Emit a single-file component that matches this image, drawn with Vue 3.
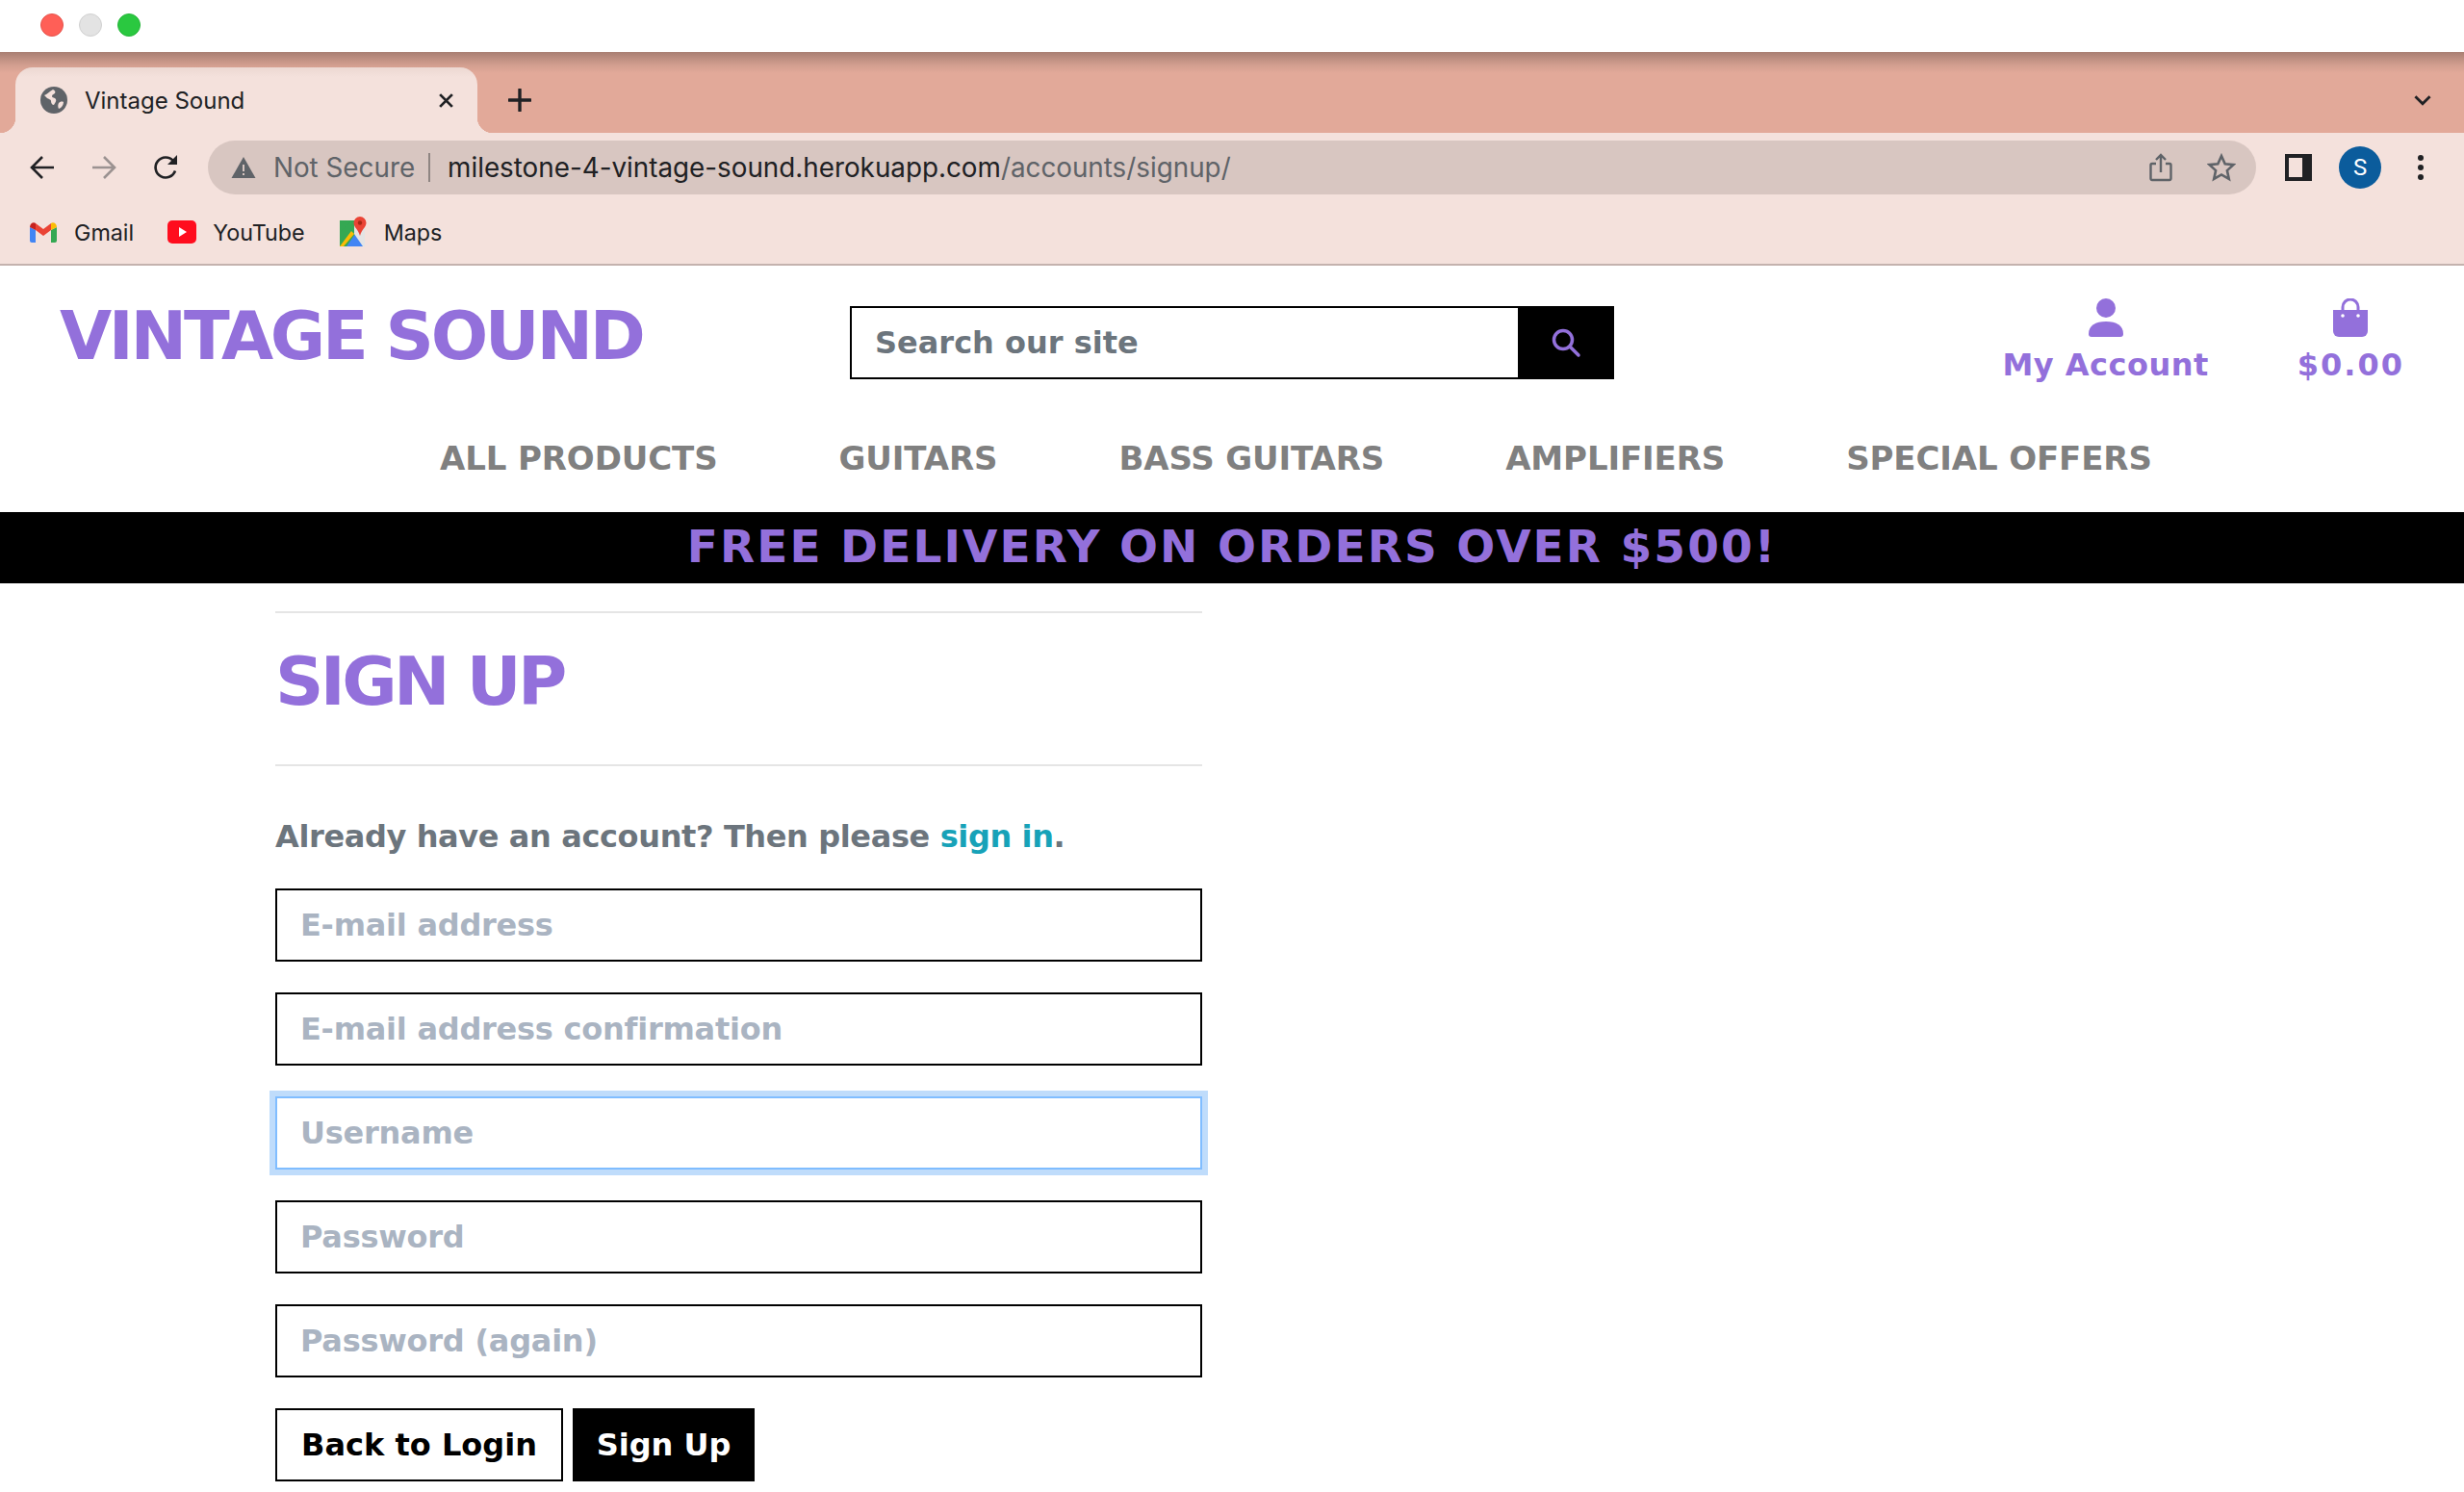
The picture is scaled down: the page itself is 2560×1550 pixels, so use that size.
<script setup>
const bookmarks = ['Gmail', 'YouTube', 'Maps']
const navLinks = ['ALL PRODUCTS', 'GUITARS', 'BASS GUITARS', 'AMPLIFIERS', 'SPECIAL OFFERS']
const fields = [
  { placeholder: 'E-mail address', type: 'email' },
  { placeholder: 'E-mail address confirmation', type: 'email' },
  { placeholder: 'Username', type: 'text', focused: true },
  { placeholder: 'Password', type: 'password' },
  { placeholder: 'Password (again)', type: 'password' }
]
</script>

<template>
  <div class="window">
    <div class="titlebar">
      <span class="light light--red"></span>
      <span class="light light--grey"></span>
      <span class="light light--green"></span>
    </div>

    <div class="tabstrip">
      <div class="tab">
        <svg class="tab__globe" viewBox="0 0 28 28">
          <circle cx="14" cy="14" r="14" fill="#5f6368" />
          <path d="M4 9c3-1 5-4 9-6 2 1 3 2 2 4-1 1-3 1-3 3 0 2 3 1 4 3 1 2-1 4-2 6-2 0-3-2-3-4 0-2-3-2-4-3-1-1-2-2-3-3zM19 17c1-1 3-2 5-1 0 3-2 6-5 7-1-2-1-4 0-6z" fill="#f4e1dc" />
        </svg>
        <span class="tab__title">Vintage Sound</span>
        <svg class="tab__close" viewBox="0 0 16 16">
          <path d="M2 2l12 12M14 2L2 14" stroke="#202124" stroke-width="2.6" />
        </svg>
      </div>
      <svg class="tab__new" viewBox="0 0 24 24">
        <path d="M12 1v22M1 12h22" stroke="#202124" stroke-width="3.400" stroke-linecap="round" />
      </svg>
      <svg class="tabstrip__more" viewBox="0 0 18 12">
        <path d="M2 2l7 7 7-7" fill="none" stroke="#202124" stroke-width="2.6" />
      </svg>
    </div>

    <div class="toolbar">
      <svg class="tool tool--back" viewBox="0 0 28 28">
        <path d="M26 14H3M14 3L3 14l11 11" fill="none" stroke="#202124" stroke-width="2.6" />
      </svg>
      <svg class="tool tool--forward" viewBox="0 0 28 28">
        <path d="M2 14h23M14 3l11 11-11 11" fill="none" stroke="#9b9291" stroke-width="2.6" />
      </svg>
      <svg class="tool tool--reload" viewBox="0 0 28 28">
        <path d="M23 17.500A10.500 10.500 0 1 1 21 7" fill="none" stroke="#202124" stroke-width="2.6" />
        <path d="M25 1v10H15z" fill="#202124" />
      </svg>
      <div class="omnibox">
        <svg class="omnibox__warn" viewBox="0 0 26 24">
          <path d="M13 1l12.500 22H.5z" fill="#5f6368" />
          <path d="M12 9h2v7h-2zM12 18h2v2h-2z" fill="#d8c6c1" />
        </svg>
        <span class="omnibox__secure">Not Secure</span>
        <span class="omnibox__sep"></span>
        <span class="omnibox__url">milestone-4-vintage-sound.herokuapp.com<span class="omnibox__path">/accounts/signup/</span></span>
        <svg class="omnibox__share" viewBox="0 0 24 30">
          <path d="M7 11H3a1.500 1.500 0 0 0-1.500 1.500v14A1.500 1.500 0 0 0 3 28h18a1.500 1.500 0 0 0 1.500-1.500v-14A1.500 1.500 0 0 0 21 11h-4" fill="none" stroke="#5f6368" stroke-width="2.4" />
          <path d="M12 20V2M7 7l5-5 5 5" fill="none" stroke="#5f6368" stroke-width="2.4" />
        </svg>
        <svg class="omnibox__star" viewBox="0 0 30 30">
          <path d="M15 3l3.700 8.200 8.800.9-6.600 6 1.900 8.800L15 22.400 7.200 26.900l1.900-8.800-6.600-6 8.800-.9z" fill="none" stroke="#5f6368" stroke-width="2.600" />
        </svg>
      </div>
      <svg class="tool tool--side" viewBox="0 0 28 28">
        <rect width="28" height="28" fill="#202124" />
        <rect x="4" y="4" width="14" height="20" fill="#f4e1dc" />
      </svg>
      <div class="avatar">S</div>
      <svg class="tool tool--kebab" viewBox="0 0 6 26">
        <circle cx="3" cy="3" r="3" fill="#202124" />
        <circle cx="3" cy="13" r="3" fill="#202124" />
        <circle cx="3" cy="23" r="3" fill="#202124" />
      </svg>
    </div>

    <div class="bookmarks">
      <div v-for="item in bookmarks" :key="item" class="bookmark">
        <svg v-if="item === 'Gmail'" class="bookmark__icon" viewBox="0 0 30 24">
          <path d="M1 7v14a2 2 0 0 0 2 2h4V10z" fill="#4285f4" />
          <path d="M29 7v14a2 2 0 0 1-2 2h-4V10z" fill="#34a853" />
          <path d="M1 7c0-4 4-6 6-4v7z" fill="#c5221f" />
          <path d="M29 7c0-4-4-6-6-4v7z" fill="#fbbc04" />
          <path d="M7 3l8 6 8-6v7l-8 6-8-6z" fill="#ea4335" />
        </svg>
        <svg v-else-if="item === 'YouTube'" class="bookmark__icon" viewBox="0 0 30 24">
          <rect width="30" height="24" rx="5" fill="#ff0d1e" />
          <path d="M12 7l8 5-8 5z" fill="#fff" />
        </svg>
        <svg v-else class="bookmark__icon bookmark__icon--maps" viewBox="0 0 30 32">
          <path d="M1 4h20v27H1z" fill="#34a853" />
          <path d="M1 4h12L1 17z" fill="#34a853" />
          <path d="M8 31l9-13 9 13z" fill="#4285f4" />
          <path d="M1 31l12-16 3 3L5 31z" fill="#fbbc04" />
          <path d="M16 4h6l5 7v20h-2l-9-13z" fill="#e4e4e4" />
          <path d="M22 0a6.500 6.500 0 0 1 6.500 6.500C28.500 11 24 13 22 20c-2-7-6.500-9-6.500-13.500A6.500 6.500 0 0 1 22 0z" fill="#ea4335" />
          <circle cx="22" cy="6.500" r="2.200" fill="#a52714" />
        </svg>
        <span>{{ item }}</span>
      </div>
    </div>

    <header class="site-header">
      <div class="site-header__top">
        <a class="logo">VINTAGE SOUND</a>
        <form class="search" @submit.prevent>
          <input class="search__input" type="text" placeholder="Search our site" />
          <button class="search__btn" type="button" aria-label="Search">
            <svg viewBox="0 0 32 32" width="32" height="32">
              <circle cx="13" cy="13" r="9.500" fill="none" stroke="#9370db" stroke-width="3.500" />
              <path d="M20 20l9 9" stroke="#9370db" stroke-width="3.500" stroke-linecap="round" />
            </svg>
          </button>
        </form>
        <div class="actions">
          <a class="action action--account">
            <svg viewBox="0 0 36 40" width="36" height="40">
              <circle cx="18" cy="10" r="10" fill="#9370db" />
              <path d="M0 37c0-9 7-13 18-13s18 4 18 13a3 3 0 0 1-3 3H3a3 3 0 0 1-3-3z" fill="#9370db" />
            </svg>
            <span>My Account</span>
          </a>
          <a class="action action--cart">
            <svg viewBox="0 0 36 40" width="36" height="40">
              <path d="M10 14V9a8 8 0 0 1 16 0v5" fill="none" stroke="#9370db" stroke-width="3" />
              <path d="M0 12h36v22a6 6 0 0 1-6 6H6a6 6 0 0 1-6-6z" fill="#9370db" />
              <circle cx="10" cy="18" r="1.800" fill="#fff" />
              <circle cx="26" cy="18" r="1.800" fill="#fff" />
            </svg>
            <span>$0.00</span>
          </a>
        </div>
      </div>
      <nav class="main-nav">
        <a v-for="link in navLinks" :key="link" class="main-nav__link">{{ link }}</a>
      </nav>
      <div class="banner">FREE DELIVERY ON ORDERS OVER $500!</div>
    </header>

    <main class="signup">
      <hr class="signup__rule" />
      <h2 class="signup__title">SIGN UP</h2>
      <hr class="signup__rule" />
      <p class="signup__note">Already have an account? Then please <a class="signup__link">sign in</a>.</p>
      <form class="signup__form" @submit.prevent>
        <input
          v-for="field in fields"
          :key="field.placeholder"
          class="signup__input"
          :class="{ 'signup__input--focus': field.focused }"
          :type="field.type"
          :placeholder="field.placeholder"
        />
        <div class="signup__buttons">
          <a class="btn btn--outline">Back to Login</a>
          <button class="btn btn--solid" type="submit">Sign Up</button>
        </div>
      </form>
    </main>
  </div>
</template>

<style>
html,
body {
  margin: 0;
  background: #fff;
}
</style>

<style scoped>
.window {
  width: 2560px;
  height: 1550px;
  overflow: hidden;
  font-family: "DejaVu Sans", sans-serif;
  background: #fff;
}

.titlebar {
  height: 54px;
  box-sizing: border-box;
  padding: 14px 0 0 42px;
  display: flex;
  gap: 16px;
  background: #fff;
}

.light {
  width: 24px;
  height: 24px;
  border-radius: 50%;
  box-sizing: border-box;
}

.light--red {
  background: #ff5f57;
  border: 1px solid #e5534c;
}

.light--grey {
  background: #e3e3e3;
  border: 1px solid #d0d0d0;
}

.light--green {
  background: #2ac840;
  border: 1px solid #25b539;
}

.tabstrip {
  height: 84px;
  box-sizing: border-box;
  padding-top: 16px;
  display: flex;
  align-items: flex-start;
  background: linear-gradient(#a97f73 0, #d39f90 14px, #e2a999 22px);
}

.tab {
  position: relative;
  width: 480px;
  height: 68px;
  margin-left: 16px;
  box-sizing: border-box;
  padding: 0 24px;
  display: flex;
  align-items: center;
  background: linear-gradient(#ecd8d2 0, #f4e1dc 10px);
  border-radius: 18px 18px 0 0;
  font-family: Inter, sans-serif;
  font-size: 24px;
  color: #202124;
}

.tab::before,
.tab::after {
  content: "";
  position: absolute;
  bottom: 0;
  width: 16px;
  height: 16px;
}

.tab::before {
  left: -16px;
  background: radial-gradient(circle at 0 0, transparent 16px, #f4e1dc 16.5px);
}

.tab::after {
  right: -16px;
  background: radial-gradient(circle at 100% 0, transparent 16px, #f4e1dc 16.5px);
}

.tab__globe {
  width: 28px;
  height: 28px;
  margin-right: 18px;
  margin-left: 2px;
}

.tab__title {
  flex: 1;
}

.tab__close {
  width: 17px;
  height: 17px;
}

.tab__new {
  width: 24px;
  height: 24px;
  margin: 22px 0 0 32px;
}

.tabstrip__more {
  width: 20px;
  height: 13px;
  margin: 28px 0 0 auto;
  margin-right: 33px;
}

.toolbar {
  height: 72px;
  display: flex;
  align-items: center;
  background: #f4e1dc;
}

.tool {
  flex: none;
}

.tool--back,
.tool--forward,
.tool--reload {
  width: 28px;
  height: 28px;
}

.tool--back {
  margin-left: 30px;
}

.tool--forward {
  margin-left: 36px;
}

.tool--reload {
  margin-left: 37px;
}

.omnibox {
  width: 2128px;
  height: 56px;
  margin-left: 29px;
  box-sizing: border-box;
  padding: 0 21px 0 24px;
  display: flex;
  align-items: center;
  background: #d8c6c1;
  border-radius: 28px;
  font-family: Inter, sans-serif;
  font-size: 27.8px;
  color: #202124;
}

.omnibox__warn {
  width: 26px;
  height: 24px;
}

.omnibox__secure {
  margin-left: 18px;
  color: #5f6368;
}

.omnibox__sep {
  width: 2px;
  height: 30px;
  margin: 0 18px 0 14px;
  background: #8f8582;
}

.omnibox__url {
  flex: 1;
}

.omnibox__path {
  color: #5f6368;
}

.omnibox__share {
  width: 24px;
  height: 30px;
}

.omnibox__star {
  width: 30px;
  height: 30px;
  margin-left: 36px;
}

.tool--side {
  width: 28px;
  height: 28px;
  margin-left: 30px;
}

.avatar {
  width: 44px;
  height: 44px;
  margin-left: 28px;
  border-radius: 50%;
  background: #0b5c9c;
  color: #fff;
  font-family: Roboto, sans-serif;
  font-size: 24px;
  display: flex;
  align-items: center;
  justify-content: center;
}

.tool--kebab {
  width: 6px;
  height: 26px;
  margin-left: 38px;
}

.bookmarks {
  height: 66px;
  box-sizing: border-box;
  padding: 0 0 2px 30px;
  display: flex;
  align-items: center;
  gap: 35px;
  background: #f4e1dc;
  border-bottom: 2px solid #c4b2ae;
  font-family: Inter, sans-serif;
  font-size: 23.3px;
  color: #202124;
}

.bookmark {
  display: flex;
  align-items: center;
  gap: 17px;
}

.bookmark__icon {
  width: 30px;
  height: 24px;
}

.bookmark__icon--maps {
  height: 32px;
}

.site-header__top {
  height: 149px;
  display: grid;
  grid-template-columns: 883px 794px 1fr;
}

.logo {
  padding: 33px 0 0 62px;
  font-size: 70px;
  line-height: 80px;
  font-weight: 700;
  letter-spacing: -3.3px;
  color: #9370db;
  white-space: nowrap;
}

.search {
  height: 76px;
  margin-top: 42px;
  display: flex;
}

.search__input {
  width: 694px;
  box-sizing: border-box;
  padding: 0 24px;
  border: 2px solid #000;
  border-right: 0;
  border-radius: 0;
  outline: none;
  font-family: inherit;
  font-size: 32px;
  font-weight: 700;
}

.search__input::placeholder {
  color: #6c757d;
  opacity: 1;
}

.search__btn {
  width: 100px;
  border: 0;
  padding: 0;
  background: #000;
  display: flex;
  align-items: center;
  justify-content: center;
}

.actions {
  padding: 34px 62px 0 0;
  display: flex;
  justify-content: flex-end;
  gap: 92px;
}

.action {
  display: flex;
  flex-direction: column;
  align-items: center;
  gap: 9px;
  font-size: 32px;
  line-height: 40px;
  font-weight: 700;
  color: #9370db;
}

.action--account {
  letter-spacing: 0.5px;
}

.action--cart {
  letter-spacing: 2px;
}

.main-nav {
  height: 107px;
  box-sizing: border-box;
  padding: 0 0 6px 457px;
  display: flex;
  align-items: center;
  gap: 126px;
}

.main-nav__link {
  font-size: 34px;
  font-weight: 700;
  letter-spacing: -0.12px;
  color: #808080;
  white-space: nowrap;
}

.banner {
  height: 74px;
  box-sizing: border-box;
  padding-bottom: 3px;
  display: flex;
  align-items: center;
  justify-content: center;
  background: #000;
  color: #9370db;
  font-size: 47px;
  font-weight: 700;
  letter-spacing: 2.1px;
}

.signup {
  width: 963px;
  margin-left: 286px;
  padding-top: 29px;
}

.signup__rule {
  height: 2px;
  margin: 0;
  border: 0;
  background: #e5e5e5;
}

.signup__title {
  height: 157px;
  box-sizing: border-box;
  margin: 0;
  padding-bottom: 14px;
  font-size: 70px;
  line-height: 143px;
  font-weight: 700;
  letter-spacing: -3.6px;
  color: #9370db;
}

.signup__note {
  margin: 0;
  padding-top: 50px;
  height: 127px;
  box-sizing: border-box;
  font-size: 32px;
  line-height: 46px;
  font-weight: 700;
  letter-spacing: -0.38px;
  color: #6c757d;
}

.signup__link {
  color: #17a2b8;
}

.signup__form {
  display: flex;
  flex-direction: column;
  gap: 32px;
}

.signup__input {
  height: 76px;
  box-sizing: border-box;
  padding: 0 24px;
  border: 2px solid #000;
  border-radius: 0;
  outline: none;
  font-family: inherit;
  font-size: 32px;
  font-weight: 700;
  letter-spacing: -0.25px;
}

.signup__input::placeholder {
  color: #aab4c2;
  opacity: 1;
}

.signup__input--focus {
  border-color: #80bdff;
  box-shadow: 0 0 0 6px #bfdcfb;
}

.signup__buttons {
  display: flex;
  gap: 10px;
}

.btn {
  height: 76px;
  box-sizing: border-box;
  border: 2px solid #000;
  border-radius: 0;
  display: flex;
  align-items: center;
  justify-content: center;
  font-family: inherit;
  font-size: 32px;
  font-weight: 700;
}

.btn--outline {
  width: 299px;
  background: #fff;
  color: #000;
}

.btn--solid {
  width: 189px;
  background: #000;
  color: #fff;
}
</style>
